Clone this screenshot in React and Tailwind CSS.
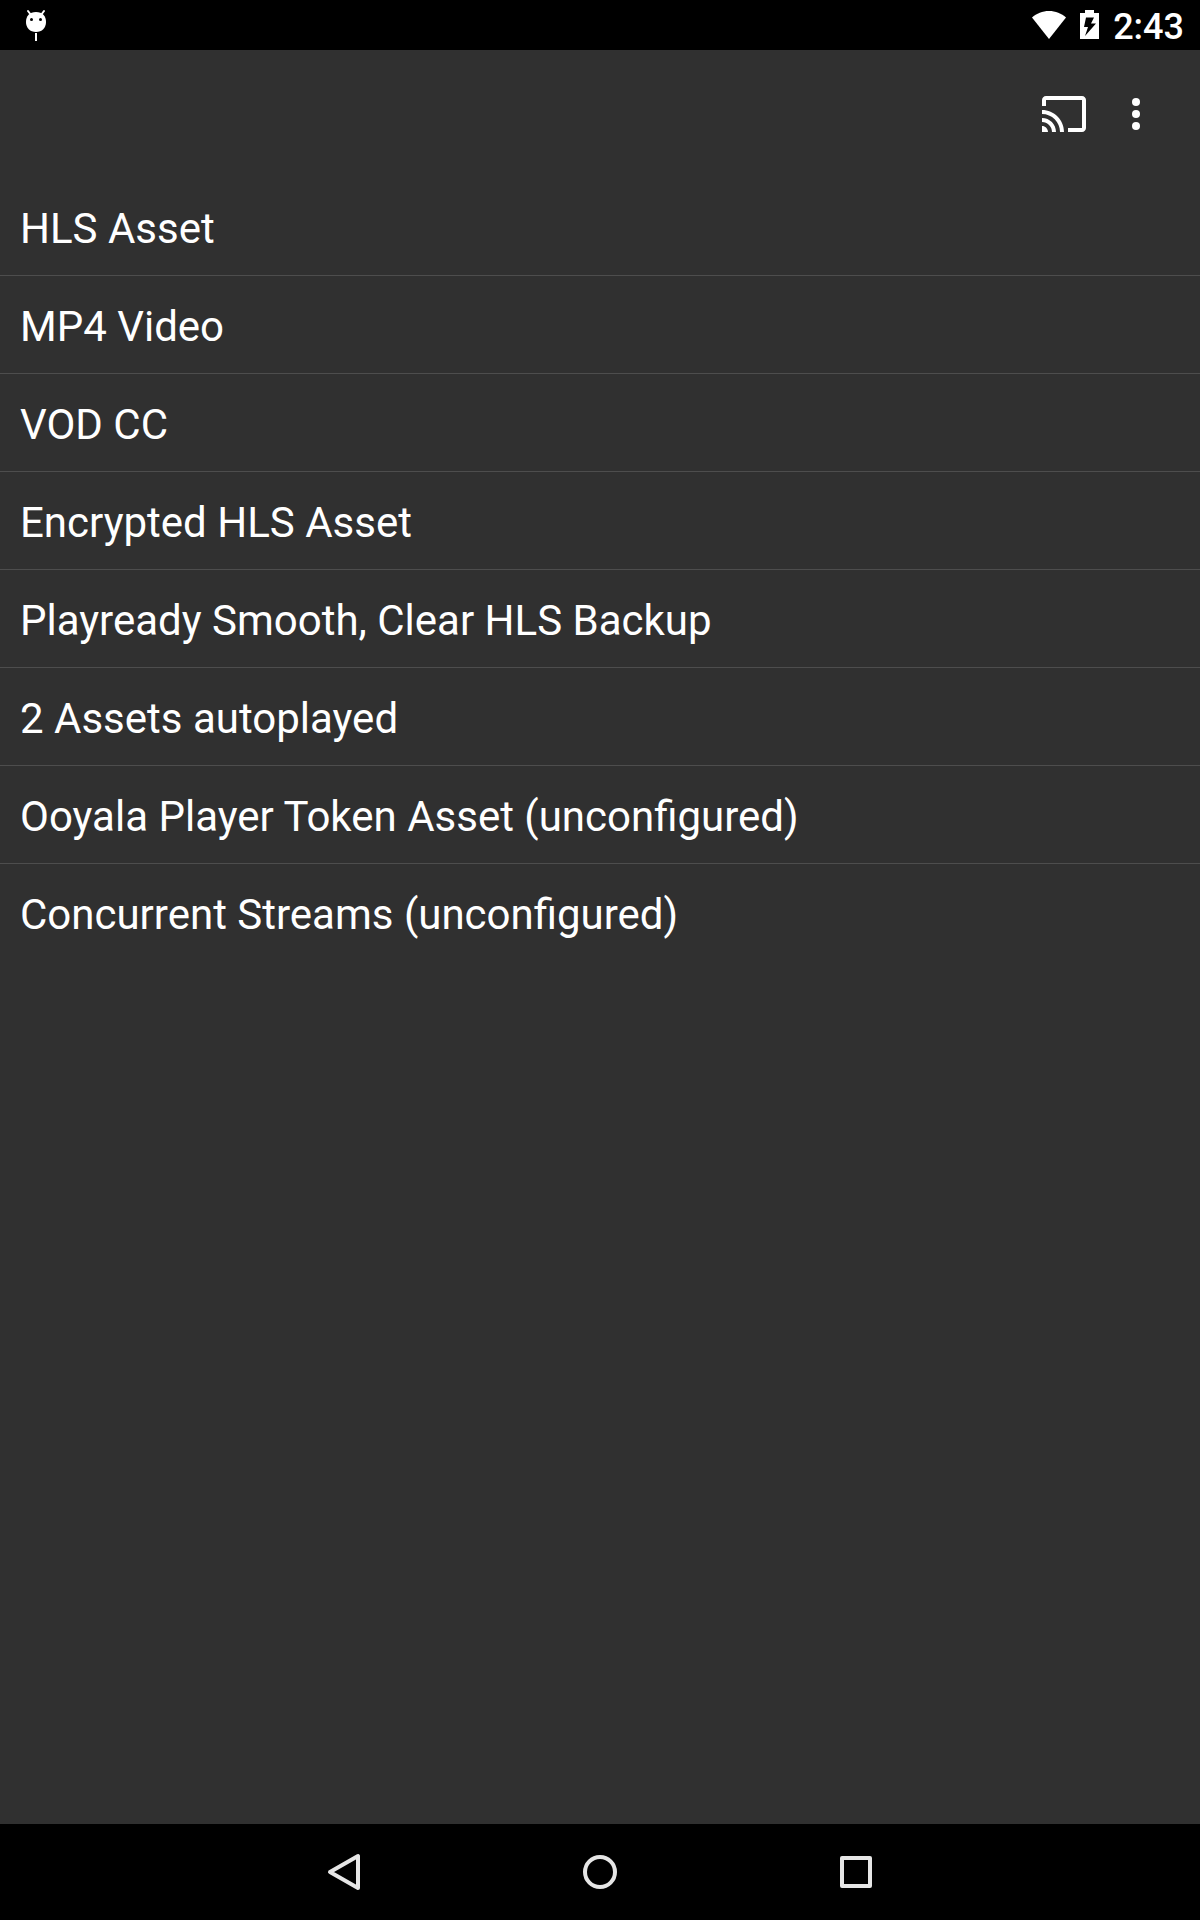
const assets = [
  "HLS Asset",
  "MP4 Video",
  "VOD CC",
  "Encrypted HLS Asset",
  "Playready Smooth, Clear HLS Backup",
  "2 Assets autoplayed",
  "Ooyala Player Token Asset (unconfigured)",
  "Concurrent Streams (unconfigured)",
];

function DebugIcon() {
  return (
    <svg className="h-8 w-5 shrink-0" viewBox="0 0 20 32" fill="none" aria-hidden="true">
      <path d="M2 2 5 6M18 2 15 6" stroke="#fff" strokeWidth="2" strokeLinecap="round" />
      <path d="M10 3c6.500 0 10 4 10 10s-4 10-10 10S0 19 0 13 3.500 3 10 3z" fill="#fff" />
      <circle cx="5.500" cy="10.500" r="1.500" fill="#000" />
      <circle cx="14.500" cy="10.500" r="1.500" fill="#000" />
      <path d="M10 24v8" stroke="#fff" strokeWidth="2" />
    </svg>
  );
}

function WifiIcon() {
  return (
    <svg className="h-7 w-[34px] shrink-0" viewBox="0 0 34 28" fill="#fff" aria-hidden="true">
      <path d="M17 28 0 6.500C4.500 2.500 10.500 0 17 0s12.500 2.500 17 6.500z" />
    </svg>
  );
}

function BatteryIcon() {
  return (
    <svg className="h-[30px] w-[19px] shrink-0" viewBox="0 0 19 30" aria-hidden="true">
      <path d="M5 0h9v3h5v26H0V3h5z" fill="#fff" />
      <path d="M6 7.500h8l-3 6h5L5 26l3-9H4z" fill="#000" />
    </svg>
  );
}

function CastIcon() {
  return (
    <svg className="size-12" viewBox="0 0 24 24" fill="#fff" aria-hidden="true">
      <path d="M21 3H3c-1.100 0-2 .9-2 2v3h2V5h18v14h-7v2h7c1.100 0 2-.9 2-2V5c0-1.100-.9-2-2-2zM1 18v3h3c0-1.660-1.340-3-3-3zm0-4v2c2.760 0 5 2.240 5 5h2c0-3.870-3.130-7-7-7zm0-4v2c4.970 0 9 4.030 9 9h2c0-6.080-4.930-11-11-11z" />
    </svg>
  );
}

function MoreIcon() {
  return (
    <svg className="size-12" viewBox="0 0 24 24" fill="#fff" aria-hidden="true">
      <circle cx="12" cy="6" r="2" />
      <circle cx="12" cy="12" r="2" />
      <circle cx="12" cy="18" r="2" />
    </svg>
  );
}

function NavButton({ label, children }) {
  return (
    <button type="button" aria-label={label} className="flex h-full w-64 max-w-1/3 items-center justify-center">
      <svg className="size-12" viewBox="0 0 48 48" fill="none" stroke="#e6e6e6" strokeWidth="4" strokeLinejoin="round" aria-hidden="true">
        {children}
      </svg>
    </button>
  );
}

export default function App() {
  return (
    <div className="flex min-h-screen flex-col bg-[#303030] font-['Roboto',sans-serif] text-white">
      <div className="flex h-[50px] items-center justify-between bg-black pr-4 pl-[26px]">
        <DebugIcon />
        <div className="flex items-center gap-3.5">
          <WifiIcon />
          <BatteryIcon />
          <time className="pt-1 text-4xl font-medium">2:43</time>
        </div>
      </div>

      <header className="flex h-32 items-center justify-end gap-6 pr-10">
        <button type="button" aria-label="Cast">
          <CastIcon />
        </button>
        <button type="button" aria-label="More options">
          <MoreIcon />
        </button>
      </header>

      <main className="flex-1">
        <ul className="divide-y divide-[#4d4d4d]">
          {assets.map((name) => (
            <li key={name}>
              <button type="button" className="block w-full px-5 pt-[26px] pb-[22px] text-left text-[42px] leading-[49px]">
                {name}
              </button>
            </li>
          ))}
        </ul>
      </main>

      <nav className="flex h-24 items-center justify-center bg-black">
        <NavButton label="Back">
          <path d="M10 24 38 8v32z" />
        </NavButton>
        <NavButton label="Home">
          <circle cx="24" cy="24" r="15" />
        </NavButton>
        <NavButton label="Overview">
          <rect x="10" y="10" width="28" height="28" />
        </NavButton>
      </nav>
    </div>
  );
}
